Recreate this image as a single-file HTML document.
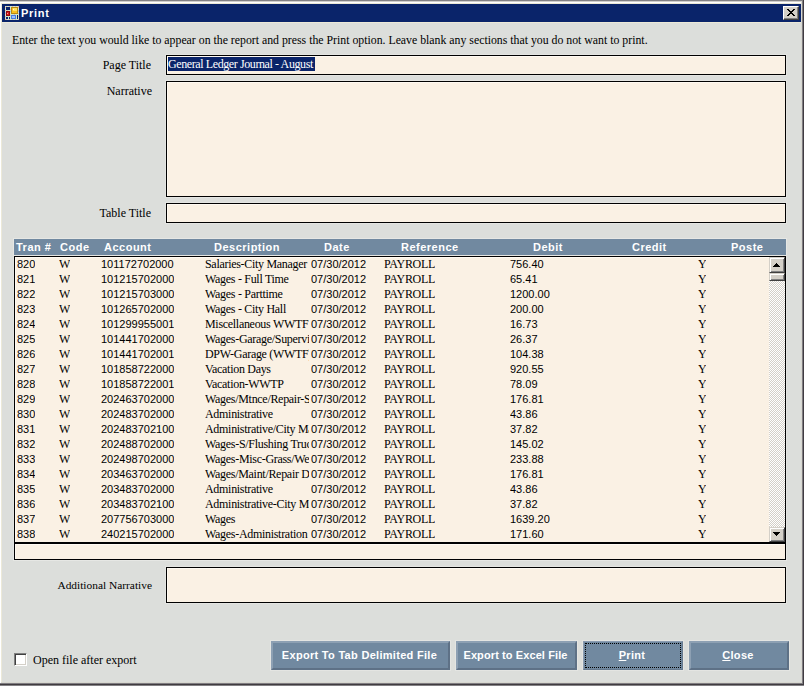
<!DOCTYPE html>
<html><head><meta charset="utf-8">
<style>
*{margin:0;padding:0;box-sizing:border-box}
html,body{width:804px;height:686px;overflow:hidden;background:#808080}
body{position:relative;font-family:"Liberation Serif",serif;color:#000}
.a{position:absolute}
.win{left:0;top:0;width:804px;height:686px;background:#dcdedb}
.t{position:absolute;white-space:pre;line-height:14px}
.lbl{font-size:12px;text-align:right;width:200px}
.box{position:absolute;left:166px;width:620px;background:#faf1e4;border:1px solid #000;box-shadow:0 0 0 1px #e4e5e2, inset 1px 1px 0 #fffaf2}
.hdr{position:absolute;left:14px;top:239px;width:772px;height:16px;background:#7189a0;font-family:"Liberation Sans",sans-serif;font-weight:bold;font-size:11px;color:#fff;box-shadow:0 0 0 1px #e6e7e4}
.hdr span{position:absolute;top:0;line-height:16px;white-space:pre;letter-spacing:0.5px}
.btn{position:absolute;top:641px;height:29px;background:#7189a0;border-style:solid;border-width:2px;border-color:#8da0b3 #5e7186 #5e7186 #8da0b3;font-family:"Liberation Sans",sans-serif;font-weight:bold;font-size:11px;color:#fff;text-align:center;line-height:25px;letter-spacing:0.3px;padding-right:2px;box-shadow:0 0 0 1px #e4e5e2}
.rows{position:absolute;left:15px;top:257px;width:754px;height:285px;overflow:hidden}
.r{position:absolute;left:0;width:754px;height:15px;line-height:15px;white-space:pre}
.r i,.r b{position:absolute;top:0;font-style:normal;font-weight:normal;white-space:pre;overflow:hidden}
.r i{font-family:"Liberation Sans",sans-serif;font-size:11px}
.r b{font-family:"Liberation Serif",serif;font-size:12px;letter-spacing:-0.3px;top:0}
.c0{left:2px}.c1{left:44px}.c2{left:86px}.c3{left:190px;width:104px}.c4{left:296px}.c5{left:369px;letter-spacing:0.2px}.c6{left:495px}.c7{left:683px}
.sb{position:absolute;left:769px;top:257px;width:16px;height:285px;background-color:#eeede8;background-image:repeating-conic-gradient(#d4d0c8 0 25%,#fff 0 50%);background-size:2px 2px}
.sbtn{position:absolute;left:0;width:16px;background:#d4d0c8;border-style:solid;border-width:1px;border-color:#d4d0c8 #404040 #404040 #d4d0c8;box-shadow:inset 1px 1px 0 #fff, inset -1px -1px 0 #808080}
</style></head><body>
<div class="a win"></div>
<!-- frame lines -->
<div class="a" style="left:0;top:0;width:804px;height:1px;background:#838185"></div>
<div class="a" style="left:0;top:1px;width:802px;height:1px;background:#d0cfcb"></div>
<div class="a" style="left:0;top:2px;width:802px;height:1px;background:#fff"></div>
<div class="a" style="left:1px;top:3px;width:801px;height:1px;background:#ece9d8"></div>
<div class="a" style="left:0;top:2px;width:1px;height:683px;background:#fff"></div>
<div class="a" style="left:1px;top:3px;width:1px;height:680px;background:#ece9d8"></div>
<div class="a" style="left:2px;top:22px;width:799px;height:1px;background:#ece9d8"></div>
<div class="a" style="left:801px;top:1px;width:1px;height:683px;background:#d8d8d0"></div>
<div class="a" style="left:802px;top:1px;width:1px;height:684px;background:#807d82"></div>
<div class="a" style="left:803px;top:0;width:1px;height:686px;background:#403c40"></div>
<div class="a" style="left:1px;top:682px;width:801px;height:1px;background:#d8d8d0"></div>
<div class="a" style="left:0;top:683px;width:803px;height:1px;background:#807d82"></div>
<div class="a" style="left:0;top:684px;width:803px;height:1px;background:#403c40"></div>
<div class="a" style="left:0;top:685px;width:804px;height:1px;background:#838185"></div>

<!-- title bar -->
<div class="a" style="left:2px;top:4px;width:799px;height:18px;background:#0a246a"></div>
<svg class="a" style="left:5px;top:6px" width="14" height="14" shape-rendering="crispEdges">
<rect x="0" y="0" width="14" height="14" fill="#cde8d0"/>
<g fill="#eab4a8"><rect x="1" y="0" width="1" height="1"/><rect x="1" y="13" width="1" height="1"/><rect x="0" y="1" width="1" height="1"/><rect x="13" y="1" width="1" height="1"/><rect x="4" y="0" width="1" height="1"/><rect x="4" y="13" width="1" height="1"/><rect x="0" y="4" width="1" height="1"/><rect x="13" y="4" width="1" height="1"/><rect x="7" y="0" width="1" height="1"/><rect x="7" y="13" width="1" height="1"/><rect x="0" y="7" width="1" height="1"/><rect x="13" y="7" width="1" height="1"/><rect x="10" y="0" width="1" height="1"/><rect x="10" y="13" width="1" height="1"/><rect x="0" y="10" width="1" height="1"/><rect x="13" y="10" width="1" height="1"/><rect x="13" y="0" width="1" height="1"/><rect x="13" y="13" width="1" height="1"/><rect x="0" y="13" width="1" height="1"/><rect x="13" y="13" width="1" height="1"/><rect x="5" y="3" width="1" height="1"/><rect x="5" y="9" width="1" height="1"/><rect x="2" y="4" width="1" height="1"/><rect x="9" y="8" width="1" height="1"/></g>
<g fill="#9cc4f0"><rect x="5" y="5" width="1" height="1"/><rect x="0" y="6" width="1" height="1"/><rect x="13" y="5" width="1" height="1"/></g>
<rect x="1" y="1" width="4" height="3" fill="#0a246a"/>
<rect x="6" y="1" width="7" height="7" fill="#b88a10"/>
<rect x="7" y="2" width="5" height="5" fill="#f8c020"/>
<rect x="8" y="2" width="4" height="3" fill="#ffe060"/>
<rect x="8" y="3" width="1" height="1" fill="#fffad0"/>
<rect x="1" y="5" width="4" height="5" fill="#980808"/>
<rect x="2" y="6" width="2" height="3" fill="#d82020"/>
<rect x="2" y="7" width="1" height="1" fill="#f4a0a0"/>
<rect x="6" y="9" width="5" height="4" fill="#4a7ee0"/>
<rect x="7" y="10" width="3" height="2" fill="#98c0ff"/>
<rect x="1" y="11" width="2" height="2" fill="#0a246a"/>
<rect x="4" y="11" width="1" height="2" fill="#0a246a"/>
<rect x="12" y="9" width="1" height="4" fill="#0a246a"/>
</svg>
<div class="t" style="left:21px;top:6px;font-family:'Liberation Sans',sans-serif;font-weight:bold;font-size:11px;letter-spacing:0.7px;color:#fff">Print</div>
<div class="a" style="left:783px;top:6px;width:16px;height:14px;background:#d4d0c8;border-style:solid;border-width:1px;border-color:#fff #404040 #404040 #fff;box-shadow:inset -1px -1px 0 #808080"></div>
<svg class="a" style="left:787px;top:9px" width="8" height="7" shape-rendering="crispEdges"><path d="M0 0h2v1h-2zM6 0h2v1h-2zM1 1h2v1h-2zM5 1h2v1h-2zM2 2h4v1h-4zM3 3h2v1h-2zM2 4h4v1h-4zM1 5h2v1h-2zM5 5h2v1h-2zM0 6h2v1h-2zM6 6h2v1h-2z" fill="#000"/></svg>

<!-- instruction -->
<div class="t" style="left:12px;top:33px;font-size:11.8px">Enter the text you would like to appear on the report and press the Print option. Leave blank any sections that you do not want to print.</div>

<!-- labels -->
<div class="t lbl" style="left:-49px;top:58px">Page Title</div>
<div class="t lbl" style="left:-48px;top:84px">Narrative</div>
<div class="t lbl" style="left:-49px;top:206px">Table Title</div>
<div class="t lbl" style="left:-48px;top:578px;font-size:11.4px">Additional Narrative</div>

<!-- boxes -->
<div class="box" style="top:55px;height:20px"></div>
<div class="a" style="left:168px;top:57px;width:147px;height:14px;background:#0a246a"></div>
<div class="t" style="left:168px;top:57px;font-size:12px;letter-spacing:-0.4px;color:#fff">General Ledger Journal - August</div>
<div class="box" style="top:81px;height:116px"></div>
<div class="box" style="top:203px;height:20px"></div>
<div class="box" style="top:567px;height:36px"></div>

<!-- grid header -->
<div class="hdr">
<span style="left:2px">Tran #</span><span style="left:46px">Code</span><span style="left:90px">Account</span><span style="left:200px">Description</span><span style="left:310px">Date</span><span style="left:387px">Reference</span><span style="left:519px">Debit</span><span style="left:618px">Credit</span><span style="left:717px">Poste</span>
</div>

<!-- list -->
<div class="box" style="left:14px;top:256px;width:772px;height:287px"></div>
<div class="rows">
<div class="r" style="top:0px"><i class="c0">820</i><b class="c1">W</b><i class="c2">101172702000</i><b class="c3">Salaries-City Manager</b><i class="c4">07/30/2012</i><b class="c5">PAYROLL</b><i class="c6">756.40</i><b class="c7">Y</b></div>
<div class="r" style="top:15px"><i class="c0">821</i><b class="c1">W</b><i class="c2">101215702000</i><b class="c3">Wages - Full Time</b><i class="c4">07/30/2012</i><b class="c5">PAYROLL</b><i class="c6">65.41</i><b class="c7">Y</b></div>
<div class="r" style="top:30px"><i class="c0">822</i><b class="c1">W</b><i class="c2">101215703000</i><b class="c3">Wages - Parttime</b><i class="c4">07/30/2012</i><b class="c5">PAYROLL</b><i class="c6">1200.00</i><b class="c7">Y</b></div>
<div class="r" style="top:45px"><i class="c0">823</i><b class="c1">W</b><i class="c2">101265702000</i><b class="c3">Wages - City Hall</b><i class="c4">07/30/2012</i><b class="c5">PAYROLL</b><i class="c6">200.00</i><b class="c7">Y</b></div>
<div class="r" style="top:60px"><i class="c0">824</i><b class="c1">W</b><i class="c2">101299955001</i><b class="c3">Miscellaneous WWTF</b><i class="c4">07/30/2012</i><b class="c5">PAYROLL</b><i class="c6">16.73</i><b class="c7">Y</b></div>
<div class="r" style="top:75px"><i class="c0">825</i><b class="c1">W</b><i class="c2">101441702000</i><b class="c3">Wages-Garage/Supervisor</b><i class="c4">07/30/2012</i><b class="c5">PAYROLL</b><i class="c6">26.37</i><b class="c7">Y</b></div>
<div class="r" style="top:90px"><i class="c0">826</i><b class="c1">W</b><i class="c2">101441702001</i><b class="c3">DPW-Garage (WWTF)</b><i class="c4">07/30/2012</i><b class="c5">PAYROLL</b><i class="c6">104.38</i><b class="c7">Y</b></div>
<div class="r" style="top:105px"><i class="c0">827</i><b class="c1">W</b><i class="c2">101858722000</i><b class="c3">Vacation Days</b><i class="c4">07/30/2012</i><b class="c5">PAYROLL</b><i class="c6">920.55</i><b class="c7">Y</b></div>
<div class="r" style="top:120px"><i class="c0">828</i><b class="c1">W</b><i class="c2">101858722001</i><b class="c3">Vacation-WWTP</b><i class="c4">07/30/2012</i><b class="c5">PAYROLL</b><i class="c6">78.09</i><b class="c7">Y</b></div>
<div class="r" style="top:135px"><i class="c0">829</i><b class="c1">W</b><i class="c2">202463702000</i><b class="c3">Wages/Mtnce/Repair-Streets</b><i class="c4">07/30/2012</i><b class="c5">PAYROLL</b><i class="c6">176.81</i><b class="c7">Y</b></div>
<div class="r" style="top:150px"><i class="c0">830</i><b class="c1">W</b><i class="c2">202483702000</i><b class="c3">Administrative</b><i class="c4">07/30/2012</i><b class="c5">PAYROLL</b><i class="c6">43.86</i><b class="c7">Y</b></div>
<div class="r" style="top:165px"><i class="c0">831</i><b class="c1">W</b><i class="c2">202483702100</i><b class="c3">Administrative/City Manager</b><i class="c4">07/30/2012</i><b class="c5">PAYROLL</b><i class="c6">37.82</i><b class="c7">Y</b></div>
<div class="r" style="top:180px"><i class="c0">832</i><b class="c1">W</b><i class="c2">202488702000</i><b class="c3">Wages-S/Flushing Trucks</b><i class="c4">07/30/2012</i><b class="c5">PAYROLL</b><i class="c6">145.02</i><b class="c7">Y</b></div>
<div class="r" style="top:195px"><i class="c0">833</i><b class="c1">W</b><i class="c2">202498702000</i><b class="c3">Wages-Misc-Grass/Weeds</b><i class="c4">07/30/2012</i><b class="c5">PAYROLL</b><i class="c6">233.88</i><b class="c7">Y</b></div>
<div class="r" style="top:210px"><i class="c0">834</i><b class="c1">W</b><i class="c2">203463702000</i><b class="c3">Wages/Maint/Repair Dept</b><i class="c4">07/30/2012</i><b class="c5">PAYROLL</b><i class="c6">176.81</i><b class="c7">Y</b></div>
<div class="r" style="top:225px"><i class="c0">835</i><b class="c1">W</b><i class="c2">203483702000</i><b class="c3">Administrative</b><i class="c4">07/30/2012</i><b class="c5">PAYROLL</b><i class="c6">43.86</i><b class="c7">Y</b></div>
<div class="r" style="top:240px"><i class="c0">836</i><b class="c1">W</b><i class="c2">203483702100</i><b class="c3">Administrative-City Manager</b><i class="c4">07/30/2012</i><b class="c5">PAYROLL</b><i class="c6">37.82</i><b class="c7">Y</b></div>
<div class="r" style="top:255px"><i class="c0">837</i><b class="c1">W</b><i class="c2">207756703000</i><b class="c3">Wages</b><i class="c4">07/30/2012</i><b class="c5">PAYROLL</b><i class="c6">1639.20</i><b class="c7">Y</b></div>
<div class="r" style="top:270px"><i class="c0">838</i><b class="c1">W</b><i class="c2">240215702000</i><b class="c3">Wages-Administration</b><i class="c4">07/30/2012</i><b class="c5">PAYROLL</b><i class="c6">171.60</i><b class="c7">Y</b></div>
</div>
<div class="sb">
<div class="sbtn" style="top:0;height:16px"></div>
<svg class="a" style="left:4px;top:6px" width="7" height="4" shape-rendering="crispEdges"><path d="M3 0h1v1h1v1h1v1h1v1h-7v-1h1v-1h1v-1h1z" fill="#000"/></svg>
<div class="sbtn" style="top:16px;height:8px"></div>
<div class="sbtn" style="top:270px;height:15px"></div>
<svg class="a" style="left:4px;top:275px" width="7" height="4" shape-rendering="crispEdges"><path d="M0 0h7v1h-1v1h-1v1h-1v1h-1v-1h-1v-1h-1v-1h-1z" fill="#000"/></svg>
</div>
<div class="box" style="left:14px;top:543px;width:772px;height:17px;box-shadow:1px 1px 0 0 #e6e7e4,-1px 1px 0 0 #e6e7e4,inset 1px 1px 0 #fffaf2"></div>

<!-- checkbox -->
<div class="a" style="left:14px;top:653px;width:13px;height:13px;background:#fff;border-style:solid;border-width:1px;border-color:#808080 #fff #fff #808080;box-shadow:inset 1px 1px 0 #404040, inset -1px -1px 0 #d4d0c8"></div>
<div class="t" style="left:33px;top:653px;font-size:12px">Open file after export</div>

<!-- buttons -->
<div class="btn" style="left:271px;width:179px">Export To Tab Delimited File</div>
<div class="btn" style="left:456px;width:121px;letter-spacing:0.1px">Export to Excel File</div>
<div class="btn" style="left:583px;width:100px;border-width:1px;border-color:#8b9cb0 #66798e #66798e #8b9cb0;line-height:27px"><u>P</u>rint<div class="a" style="left:1px;top:1px;width:96px;height:25px;border:1px dotted #000"></div></div>
<div class="btn" style="left:689px;width:100px"><u>C</u>lose</div>
</body></html>
